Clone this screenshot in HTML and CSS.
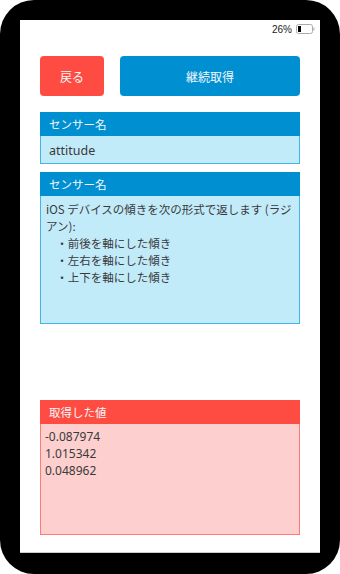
FILE: index.html
```html
<!DOCTYPE html>
<html>
<head>
<meta charset="utf-8">
<link rel="stylesheet" href="styles.css">
</head>
<body>
<div class="device">
  <div class="screen">
    <div class="status">
      <span class="pct">26%</span>
      <svg class="battery" width="19" height="10" viewBox="0 0 19 10">
        <rect x="0.5" y="0.5" width="16" height="9" rx="2" fill="#fff" stroke="#aaa"/>
        <rect x="2" y="2" width="3" height="6" fill="#000"/>
        <rect x="17.2" y="3.5" width="1.3" height="3" fill="#bbb"/>
      </svg>
    </div>
    <div class="content">
      <div class="buttons">
        <div class="btn back">戻る</div>
        <div class="btn cont">継続取得</div>
      </div>
      <div class="panel blue">
        <div class="head">センサー名</div>
        <div class="body short">attitude</div>
      </div>
      <div class="panel blue">
        <div class="head">センサー名</div>
        <div class="body desc">iOS デバイスの傾きを次の形式で返します (ラジアン):<br>&nbsp;&nbsp;&nbsp;&nbsp;・前後を軸にした傾き<br>&nbsp;&nbsp;&nbsp;&nbsp;・左右を軸にした傾き<br>&nbsp;&nbsp;&nbsp;&nbsp;・上下を軸にした傾き</div>
      </div>
      <div class="panel red">
        <div class="head">取得した値</div>
        <div class="body vals">-0.087974<br>1.015342<br>0.048962</div>
      </div>
    </div>
  </div>
</div>
</body>
</html>
```
FILE: styles.css
```css
html, body {
  margin: 0;
  padding: 0;
  background: #fff;
}
body {
  font-family: "Noto Sans CJK JP", "Noto Sans", sans-serif;
}
.device {
  width: 340px;
  height: 574px;
  box-sizing: border-box;
  background: #000;
  border-radius: 34px;
  padding: 20px 20px 21px 20px;
}
.screen {
  background: #fff;
  height: 533px;
  border-bottom: 1px solid #ccc;
  box-sizing: border-box;
  display: flex;
  flex-direction: column;
}
.status {
  height: 16px;
  display: flex;
  justify-content: flex-end;
  align-items: center;
  padding: 0 5px 0 0;
  margin-top: 1px;
}
.pct {
  font-family: "Liberation Sans", sans-serif;
  font-size: 10px;
  color: #222;
  margin-right: 4px;
}
.content {
  padding: 19px 20px 0 20px;
}
.buttons {
  display: flex;
  gap: 16px;
  height: 40px;
}
.btn {
  display: flex;
  align-items: center;
  justify-content: center;
  color: #f4f8fb;
  font-size: 12px;
  border-radius: 4px;
}
.back {
  width: 64px;
  background: #ff4c43;
}
.cont {
  flex: 1;
  background: #0090d2;
}
.panel {
  margin-top: 16px;
  box-sizing: border-box;
}
.panel + .panel {
  margin-top: 8px;
}
.head {
  height: 24px;
  line-height: 24px;
  color: #f4f8fb;
  font-size: 11.5px;
  padding-left: 9px;
}
.body {
  font-size: 12px;
  color: #3a3a3a;
  box-sizing: border-box;
}
.blue .head { background: #0090d2; }
.blue .body {
  background: #c2ebfa;
  border: 1px solid #44b4e4;
  border-top: none;
}
.short {
  height: 28px;
  line-height: 28px;
  padding: 1px 0 0 8px;
  font-family: "Noto Sans", sans-serif;
  font-size: 12.5px;
}
.desc {
  height: 128px;
  padding: 5px 2px 0 5px;
  line-height: 17px;
  font-size: 11.5px;
}
.red { margin-top: 76px !important; }
.red .head { background: #ff4c43; }
.red .body {
  background: #fdd0cf;
  border: 1px solid #ff7b73;
  border-top: none;
  height: 111px;
}
.vals {
  padding: 4px 4px;
  line-height: 17px;
  font-family: "Noto Sans", sans-serif;
  font-size: 12px;
}
```
